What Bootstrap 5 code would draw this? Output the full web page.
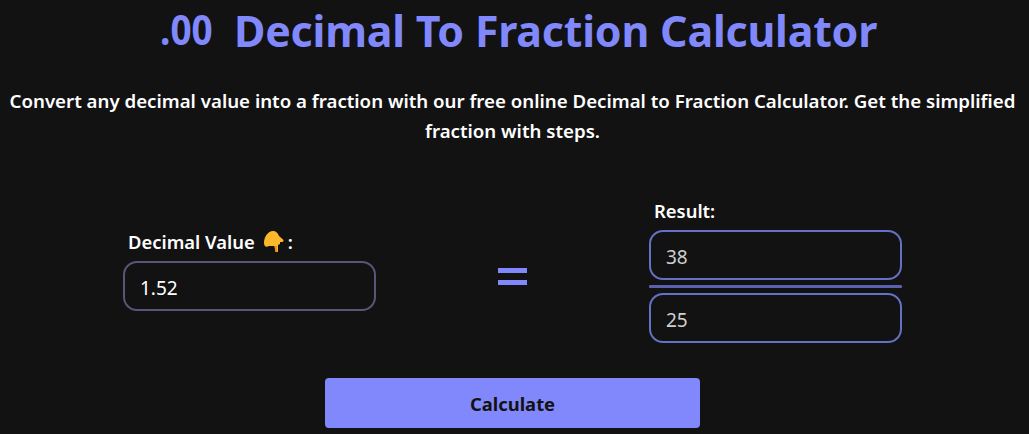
<!doctype html>
<html lang="en"><head><meta charset="utf-8"><title>Decimal To Fraction Calculator</title>
<link rel="stylesheet" href="https://cdn.jsdelivr.net/npm/bootstrap@5.3.0/dist/css/bootstrap.min.css">
<style>
html,body{height:434px;overflow:hidden}
body{background:#121212;color:#fff;font-family:"Noto Sans",sans-serif}
.page-wrap{width:1029px}
.head-row{height:62px;padding-left:160px;color:#8088fb}
.logo-mark{font-size:42px;font-weight:700;line-height:58px;width:75px;transform:scaleX(.88);transform-origin:left top;flex:none}
.page-title{font-size:42.9px;font-weight:700;line-height:62px;margin:0 0 0 -1px;color:#8088fb;letter-spacing:-.2px;white-space:nowrap}
.intro{font-size:18.68px;font-weight:600;line-height:30px;margin:24px 0 0;height:60px;padding-right:4px}
.calc-row{margin-top:53px;height:144px}
.side-left{width:253px;margin-left:123px;padding-top:31px;flex:none}
.side-right{width:253px;flex:none}
.equals{width:273px;padding-top:69px;flex:none}
.equals i{display:block;width:29px;height:5px;background:#8088fb;margin-bottom:7px}
.fld-label{font-size:18.4px;font-weight:600;line-height:24px;margin:0 0 7px 5px;height:24px;display:flex;align-items:center}
.fld{height:50px;border-radius:14px;background:#121212!important;font-size:19px;padding:3px 15px 0;box-shadow:none!important;font-family:inherit}
.fld-in{border:2px solid #5a5478;color:#fff!important}
.fld-out{border:2px solid #6770c4;color:#cfcfcf!important}
.rule-line{height:3px;background:#5a60ae;margin:5px 0 5px;border-radius:1px}
.btn-go{width:375px;height:50px;margin:35px 0 0 325px;display:block;background:#8088fb;border:0;border-radius:4px;color:#121212;font-size:18.4px;font-weight:700;padding:1px 0 0}
.btn-go:hover{background:#8088fb;color:#121212}
.hand-ico{margin:0 4px 0 9px;flex:none}
</style></head><body>
<main class="page-wrap">
<header class="head-row d-flex align-items-start">
<div class="logo-mark">.00</div>
<h1 class="page-title">Decimal To Fraction Calculator</h1>
</header>
<p class="intro text-center">Convert any decimal value into a fraction with our free online Decimal to Fraction Calculator. Get the simplified fraction with steps.</p>
<div class="calc-row d-flex">
<div class="side-left">
<label class="fld-label" for="dv">Decimal Value<svg class="hand-ico" width="20" height="22" viewBox="0 0 20 22"><path fill="#fdb72b" d="M0 12C0 6 4 0 9 0c3 0 5 2 6 5l4 3.500c1 1 .5 2.500-1 2.500h-2v2l-2 1v6c0 1.500-2 1.500-2.500 0l-1-5H5C2 17 0 15 0 12z"/><path fill="#e8940f" d="M10.500 15H13v5.500c-.5.8-1.500.8-1.800 0z"/></svg>:</label>
<input id="dv" class="form-control fld fld-in" value="1.52">
</div>
<div class="equals d-flex flex-column align-items-center"><i></i><i></i></div>
<div class="side-right">
<label class="fld-label">Result:</label>
<input class="form-control fld fld-out" value="38" readonly>
<div class="rule-line"></div>
<input class="form-control fld fld-out" value="25" readonly>
</div>
</div>
<button class="btn btn-go" type="button">Calculate</button>
</main>
</body></html>
